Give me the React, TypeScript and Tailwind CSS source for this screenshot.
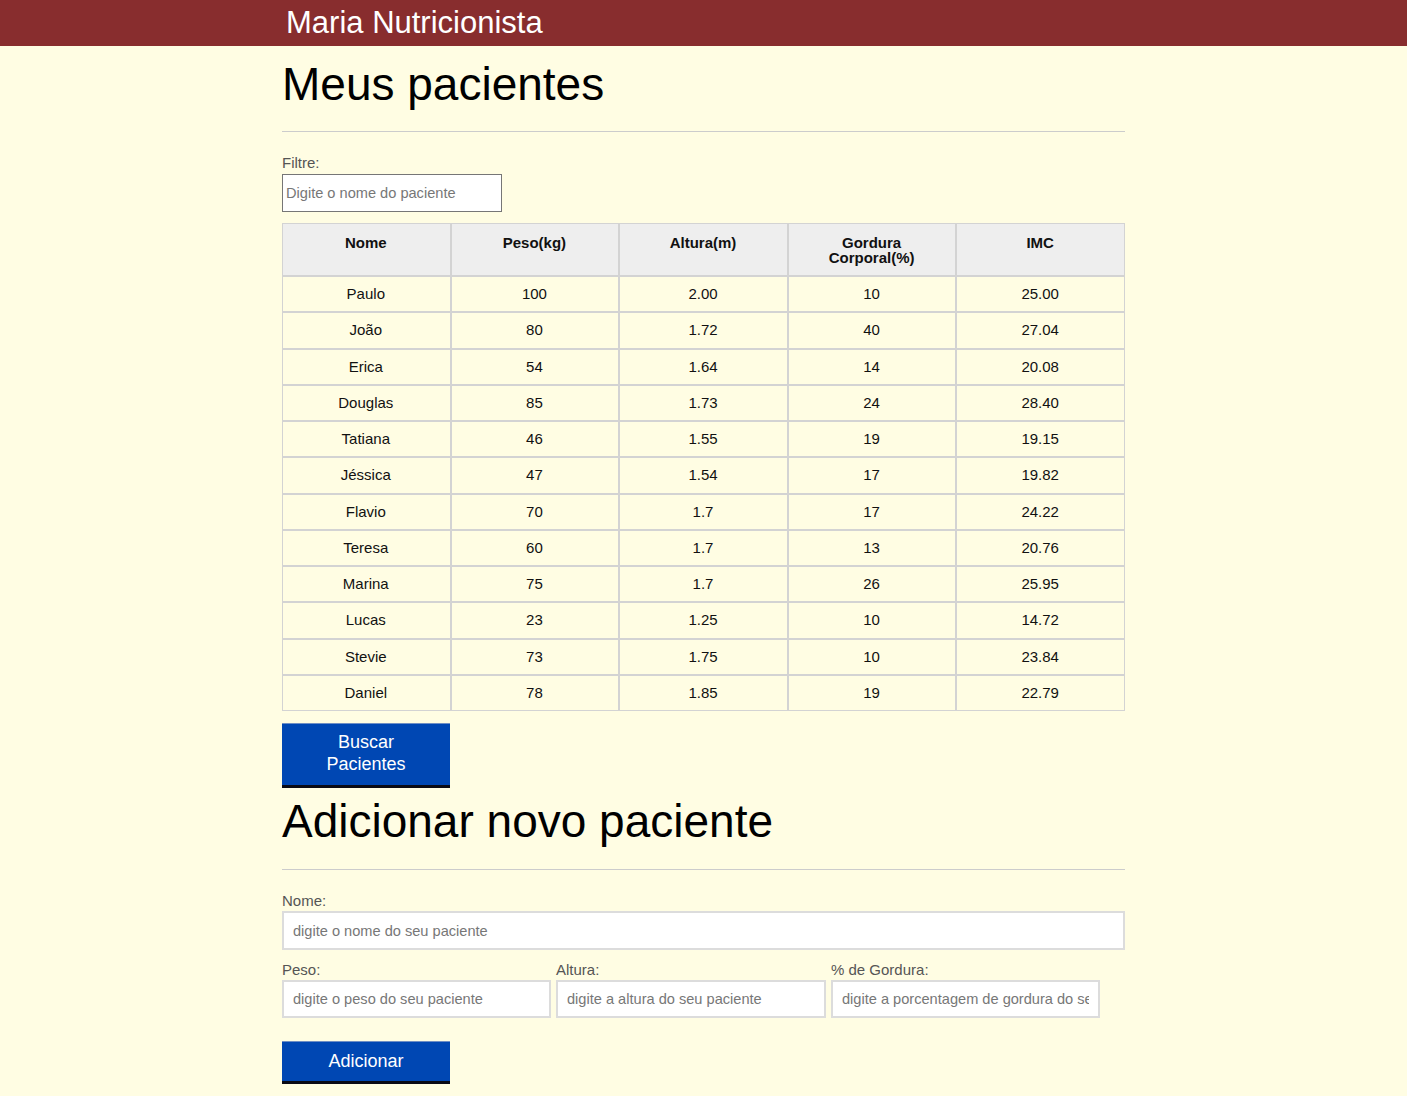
import React from "react"

interface Paciente {
    nome: string
    peso: string
    altura: string
    gordura: string
    imc: string
}

const pacientes: Paciente[] = [
    { nome: "Paulo", peso: "100", altura: "2.00", gordura: "10", imc: "25.00" },
    { nome: "João", peso: "80", altura: "1.72", gordura: "40", imc: "27.04" },
    { nome: "Erica", peso: "54", altura: "1.64", gordura: "14", imc: "20.08" },
    { nome: "Douglas", peso: "85", altura: "1.73", gordura: "24", imc: "28.40" },
    { nome: "Tatiana", peso: "46", altura: "1.55", gordura: "19", imc: "19.15" },
    { nome: "Jéssica", peso: "47", altura: "1.54", gordura: "17", imc: "19.82" },
    { nome: "Flavio", peso: "70", altura: "1.7", gordura: "17", imc: "24.22" },
    { nome: "Teresa", peso: "60", altura: "1.7", gordura: "13", imc: "20.76" },
    { nome: "Marina", peso: "75", altura: "1.7", gordura: "26", imc: "25.95" },
    { nome: "Lucas", peso: "23", altura: "1.25", gordura: "10", imc: "14.72" },
    { nome: "Stevie", peso: "73", altura: "1.75", gordura: "10", imc: "23.84" },
    { nome: "Daniel", peso: "78", altura: "1.85", gordura: "19", imc: "22.79" },
]

const headers = ["Nome", "Peso(kg)", "Altura(m)", "Gordura Corporal(%)", "IMC"]

const thClass =
    "h-[53px] w-1/5 border border-[#d3d3d3] bg-[#eeeeee] pl-[24px] pr-[25px] pt-[11px] align-top text-[15px] font-bold leading-[15px] text-[#111]"
const tdClass =
    "h-[36.25px] border border-[#d3d3d3] p-0 pb-[1px] pr-[1px] text-center align-middle text-[15px] leading-[17px] text-[#111]"

const FormField = ({ label, placeholder, className }: { label: string; placeholder: string; className?: string }) => (
    <div className={className}>
        <label className="block text-[15px] leading-[17px] text-[#555]">{label}</label>
        <input
            type="text"
            placeholder={placeholder}
            className="mt-[2px] block h-[38px] w-full border-2 border-[#dcdcdc] bg-white px-[9px] text-[14.6px] text-[#333] outline-none placeholder:text-[#777]"
        />
    </div>
)

const App = () => {
    return (
        <div className="min-h-[1096px] bg-[#fffde3] font-['Liberation_Sans',Arial,sans-serif]">
            <header className="h-[46px] bg-[#882d2e]">
                <div className="mx-auto w-[843px] pl-[4px]">
                    <h1 className="text-[31px] leading-[46px] text-white">Maria Nutricionista</h1>
                </div>
            </header>

            <main className="mx-auto w-[843px] pb-[12px]">
                <section>
                    <h2 className="mt-[12px] text-[46px] leading-[53px] text-black">Meus pacientes</h2>
                    <hr className="mt-[20px] border-0 border-t border-[#cccccc]" />

                    <label className="mt-[22px] block text-[15px] leading-[17px] text-[#555]">Filtre:</label>
                    <input
                        type="text"
                        placeholder="Digite o nome do paciente"
                        className="mt-[3px] block h-[38px] w-[220px] border border-[#767676] bg-white px-[3px] text-[14.6px] outline-none placeholder:text-[#777]"
                    />

                    <table className="mt-[11px] w-full table-fixed border-separate border-spacing-0">
                        <thead>
                            <tr>
                                {headers.map((h) => (
                                    <th key={h} className={thClass}>
                                        {h}
                                    </th>
                                ))}
                            </tr>
                        </thead>
                        <tbody>
                            {pacientes.map((p) => (
                                <tr key={p.nome}>
                                    <td className={tdClass}>{p.nome}</td>
                                    <td className={tdClass}>{p.peso}</td>
                                    <td className={tdClass}>{p.altura}</td>
                                    <td className={tdClass}>{p.gordura}</td>
                                    <td className={tdClass}>{p.imc}</td>
                                </tr>
                            ))}
                        </tbody>
                    </table>

                    <button className="mt-[12px] block h-[65px] w-[168px] border-t border-b-[3px] border-t-[#6f8fc4] border-b-[#0a0a14] bg-[#0047b3] pb-[3px] text-[18px] leading-[22px] text-white">
                        Buscar
                        <br />
                        Pacientes
                    </button>
                </section>

                <section>
                    <h2 className="mt-[7px] text-[46px] leading-[53px] text-black">Adicionar novo paciente</h2>
                    <hr className="mt-[21px] border-0 border-t border-[#cccccc]" />

                    <form onSubmit={(e) => e.preventDefault()}>
                        <div className="mt-[22px]">
                            <label className="block text-[15px] leading-[17px] text-[#555]">Nome:</label>
                            <input
                                type="text"
                                placeholder="digite o nome do seu paciente"
                                className="mt-[2px] block h-[39px] w-full border-2 border-[#dcdcdc] bg-white px-[9px] text-[14.6px] outline-none placeholder:text-[#777]"
                            />
                        </div>

                        <div className="mt-[11px] flex gap-[5px]">
                            <FormField className="w-[269px]" label="Peso:" placeholder="digite o peso do seu paciente" />
                            <FormField className="w-[270px]" label="Altura:" placeholder="digite a altura do seu paciente" />
                            <FormField className="w-[269px]" label="% de Gordura:" placeholder="digite a porcentagem de gordura do seu paciente" />
                        </div>

                        <button className="mt-[23px] block h-[43px] w-[168px] border-t border-b-[3px] border-t-[#6f8fc4] border-b-[#0a0a14] bg-[#0047b3] pb-[2px] text-[18px] leading-[22px] text-white">
                            Adicionar
                        </button>
                    </form>
                </section>
            </main>
        </div>
    )
}

export default App
